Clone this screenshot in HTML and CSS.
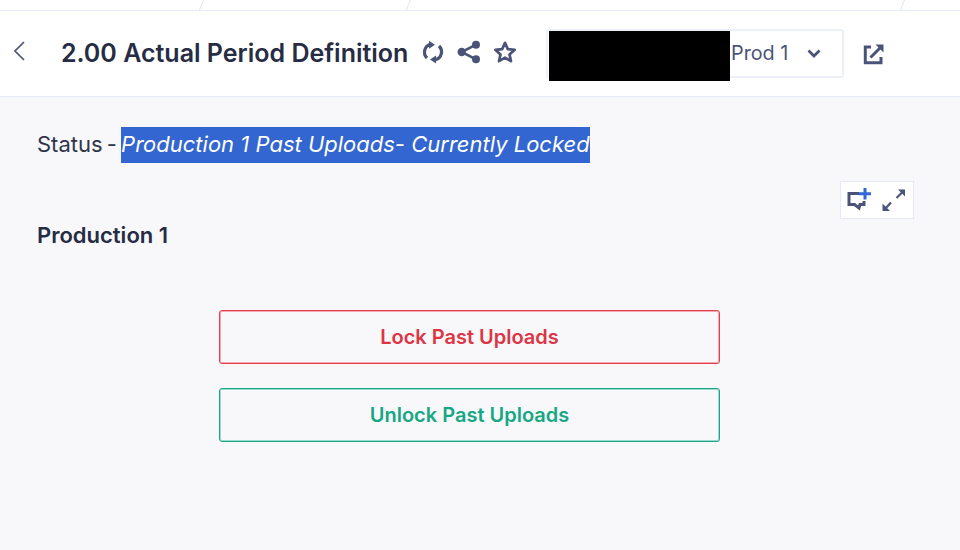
FILE: index.html
```html
<!DOCTYPE html>
<html lang="en">
<head>
<meta charset="utf-8">
<title>2.00 Actual Period Definition</title>
<link rel="stylesheet" href="styles.css">
</head>
<body>
<div class="tabstrip">
  <i class="tab tab-a"></i><i class="tab tab-b"></i><i class="tab tab-c"></i>
</div>
<header class="header">
  <button class="back" aria-label="Back">
    <svg width="14" height="22" viewBox="0 0 14 22"><path d="M12 2 3 11l9 9" fill="none" stroke="#4a5478" stroke-width="1.7"/></svg>
  </button>
  <h1 class="title">2.00 Actual Period Definition</h1>
  <div class="title-icons">
    <svg width="24" height="26" viewBox="0 0 24 26" fill="none" stroke="#4a5478">
      <path d="M6 19A8.200 8.200 0 0 1 9.500 5.200" stroke-width="3.200"/>
      <path d="M8 1.700l6 4-6 4z" fill="#4a5478" stroke="none"/>
      <path d="M18 7A8.200 8.200 0 0 1 14.500 20.800" stroke-width="3.200"/>
      <path d="M15 16.500l-6 4 6 4z" fill="#4a5478" stroke="none"/>
    </svg>
    <svg width="24" height="24" viewBox="0 0 24 24" fill="#4a5478">
      <circle cx="19" cy="4.700" r="4"/><circle cx="4.700" cy="12" r="4.200"/><circle cx="19" cy="19.300" r="4"/>
      <path d="M19 4.700 4.700 12 19 19.300" fill="none" stroke="#4a5478" stroke-width="2.600"/>
    </svg>
    <svg width="24" height="24" viewBox="0 0 24 24">
      <path d="M12 2.800l2.800 6.300 6.900.7-5.200 4.600 1.500 6.800-6-3.500-6 3.500 1.500-6.800-5.200-4.600 6.900-.7z" fill="none" stroke="#4a5478" stroke-width="2.700" stroke-linejoin="round"/>
    </svg>
  </div>
  <div class="select">
    <span class="redaction"></span>
    <span class="select-label">Prod 1</span>
    <svg width="16" height="11" viewBox="0 0 16 11"><path d="M2.500 2.500l5.500 5.500 5.500-5.500" fill="none" stroke="#4a5478" stroke-width="2.800"/></svg>
  </div>
  <button class="open" aria-label="Open">
    <svg width="22" height="22" viewBox="0 0 22 22" fill="none" stroke="#4a5478" stroke-width="3">
      <path d="M8 4H2.300v15.700H18V14"/>
      <path d="M7.500 14.500 18 4"/>
      <path d="M12.500 1.500h8v8z" fill="#4a5478" stroke="none"/>
    </svg>
  </button>
</header>
<main class="content">
  <p class="status">Status - <em class="status-value">Production 1 Past Uploads- Currently Locked</em></p>
  <div class="section-row">
    <h2 class="section-title">Production 1</h2>
    <div class="tools">
      <svg width="26" height="26" viewBox="0 0 26 26" fill="none">
        <path d="M13 6.500H3v11h5.500l4.500 3.500 1-3.500h4V14" stroke="#4a5478" stroke-width="3"/>
        <path d="M19 1v11.500M13 6.800h12" stroke="#3366d6" stroke-width="3"/>
      </svg>
      <svg width="26" height="24" viewBox="0 0 26 24" fill="none" stroke="#4a5478" stroke-width="2.200">
        <path d="M15.500 10 23 2.500"/><path d="M17 1.500h7v7z" fill="#4a5478" stroke="none"/>
        <path d="M10 14.500 3 22"/><path d="M9 23H1.500v-7.500z" fill="#4a5478" stroke="none"/>
      </svg>
    </div>
  </div>
  <div class="actions">
    <button class="btn btn-lock">Lock Past Uploads</button>
    <button class="btn btn-unlock">Unlock Past Uploads</button>
  </div>
</main>
</body>
</html>
```
FILE: styles.css
```css
* { box-sizing: border-box; }
html, body { margin: 0; height: 100%; }
body {
  width: 960px;
  height: 550px;
  overflow: hidden;
  background: #f8f8fb;
  font-family: "Inter", "Liberation Sans", sans-serif;
  color: #262c44;
  display: flex;
  flex-direction: column;
}
button { background: none; border: 0; padding: 0; font: inherit; }
svg { display: block; }

.tabstrip {
  height: 11px;
  flex: none;
  background: #fff;
  border-bottom: 1px solid #e6eaf5;
  position: relative;
}
.tab {
  position: absolute;
  top: 0;
  width: 1px;
  height: 10px;
  background: #dfe3ee;
  transform: skewX(-22deg);
}
.tab-a { left: 201px; }
.tab-b { left: 408px; }
.tab-c { left: 902px; }

.header {
  height: 86px;
  flex: none;
  background: #fff;
  border-bottom: 1px solid #e6eaf5;
  display: flex;
  align-items: center;
  padding-left: 12px;
}
.back { width: 14px; margin-right: 35px; margin-top: -5px; }
.title {
  margin: -2px 0 0;
  font-size: 25px;
  line-height: 30px;
  font-weight: 600;
  white-space: nowrap;
  color: #262c44;
  width: 349px;
}
.title-icons {
  display: flex;
  align-items: center;
  gap: 12px;
  width: 127px;
  margin-left: 11px;
  margin-top: -4px;
}
.select {
  width: 298px;
  height: 49px;
  margin-left: -2px;
  background: #fff;
  border: 2px solid #edf0f8;
  border-radius: 3px;
  display: flex;
  align-items: center;
  position: relative;
  padding-left: 183px;
}
.redaction {
  position: absolute;
  left: 1px;
  top: 0;
  width: 181px;
  height: 50px;
  background: #000;
}
.select-label {
  font-size: 19.800px;
  color: #4a5478;
  width: 75px;
  margin-top: -2px;
}
.open { margin-left: 19px; }

.content { flex: 1; padding: 30px 46px 0 37px; }
.status {
  margin: 0;
  display: flex;
  white-space: pre;
  font-size: 22px;
  line-height: 34px;
  color: #2f3549;
  word-spacing: -2px;
}
.status-value {
  background: #3366d0;
  color: #fff;
  font-style: italic;
  word-spacing: 0;
  padding-bottom: 2px;
}
.section-row {
  display: flex;
  justify-content: space-between;
  margin-top: 18px;
  height: 73px;
}
.section-title { margin: 36px 0 0; font-size: 22px; line-height: 36px; font-weight: 600; color: #262c44; }
.tools {
  width: 74px;
  height: 38px;
  background: #fff;
  border: 1px solid #e6eaf5;
  display: flex;
  align-items: center;
  gap: 9px;
  padding-left: 5px;
}
.actions {
  display: flex;
  flex-direction: column;
  gap: 24px;
  width: 501px;
  margin: 56px 0 0 182px;
}
.btn {
  height: 54px;
  border-radius: 3px;
  font-size: 20px;
  font-weight: 600;
  text-align: center;
}
.btn-lock { border: 1px solid #e23e4e; box-shadow: inset 0 0 0 1px #f2a9b0; color: #dc3545; }
.btn-unlock { border: 1px solid #17a784; box-shadow: inset 0 0 0 1px #9ddccd; color: #17a784; }
```
